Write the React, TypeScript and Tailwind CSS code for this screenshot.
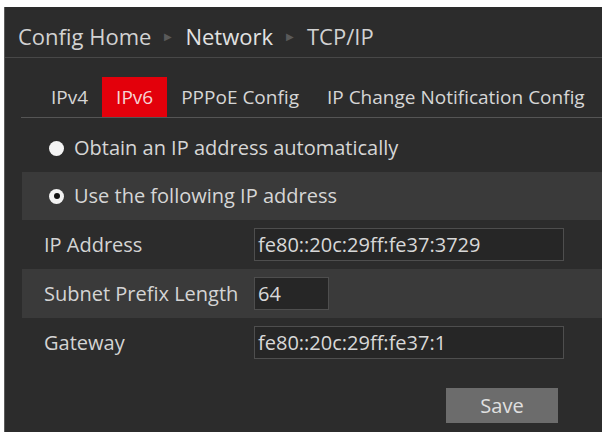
const font = { fontFamily: '"Open Sans", "Noto Sans", sans-serif' };

const Tab = ({ label, active }: { label: string; active?: boolean }) => (
  <div
    className={`h-[40px] px-[14px] flex items-center text-[19px] ${
      active ? "bg-[#e3000b] text-[#f5d4d4]" : "text-[#d6d6d6]"
    }`}
  >
    {label}
  </div>
);

const Radio = ({ checked }: { checked?: boolean }) =>
  checked ? (
    <span className="w-[15px] h-[15px] rounded-full bg-[#f2f2f2] flex items-center justify-center">
      <span className="w-[6px] h-[6px] rounded-full bg-[#111]" />
    </span>
  ) : (
    <span className="w-[15px] h-[15px] rounded-full bg-[#f4f4f4]" />
  );

const Field = ({
  label,
  value,
  shaded,
  narrow,
}: {
  label: string;
  value: string;
  shaded?: boolean;
  narrow?: boolean;
}) => (
  <div className={`h-[49px] flex items-center pl-[22px] ${shaded ? "bg-[#3a3a3a]" : ""}`}>
    <div className="w-[210px] text-[20px] text-[#d4d4d4]">{label}</div>
    <div
      className={`h-[33px] ${narrow ? "w-[75px]" : "w-[310px]"} bg-[#262626] border border-[#4e4e4e] flex items-center pl-[3px] text-[20px] text-[#d8d8d8]`}
    >
      {value}
    </div>
  </div>
);

export default function App() {
  return (
    <div className="w-[606px] h-[435px] bg-white pt-[7px] px-[4px]" style={font}>
      <div className="h-[425px] bg-[#2c2c2c] border-l border-[#5c5c5c] flex flex-col">
        {/* BREADCRUMB */}
        <div className="h-[51px] border-b border-[#484848] flex items-center pt-[8px] pl-[13px] gap-[13px] text-[22px] text-[#d2d2d2]">
          <span>Config Home</span>
          <span className="text-[10px] text-[#5a5a5a]">▶</span>
          <span className="font-medium text-[#e2e2e2]">Network</span>
          <span className="text-[10px] text-[#5a5a5a]">▶</span>
          <span>TCP/IP</span>
        </div>

        {/* TABS */}
        <div className="ml-[16px] mt-[19px] border-b border-[#555] flex pl-[16px]">
          <Tab label="IPv4" />
          <Tab label="IPv6" active />
          <Tab label="PPPoE Config" />
          <Tab label="IP Change Notification Config" />
        </div>

        {/* FORM */}
        <div className="ml-[17px] mt-[6px] flex flex-col">
          <div className="h-[48px] flex items-center pl-[27px] gap-[10px] text-[20px] text-[#d6d6d6]">
            <Radio />
            <span>Obtain an IP address automatically</span>
          </div>
          <div className="h-[48px] flex items-center pl-[27px] gap-[10px] text-[20px] text-[#d6d6d6] bg-[#3a3a3a]">
            <Radio checked />
            <span>Use the following IP address</span>
          </div>
          <Field label="IP Address" value="fe80::20c:29ff:fe37:3729" />
          <Field label="Subnet Prefix Length" value="64" shaded narrow />
          <Field label="Gateway" value="fe80::20c:29ff:fe37:1" />
          <div className="flex justify-end pr-[44px] mt-[21px]">
            <button className="w-[112px] h-[35px] bg-[#6c6c6c] text-[20px] text-[#e0e0e0]">
              Save
            </button>
          </div>
        </div>
      </div>
    </div>
  );
}
